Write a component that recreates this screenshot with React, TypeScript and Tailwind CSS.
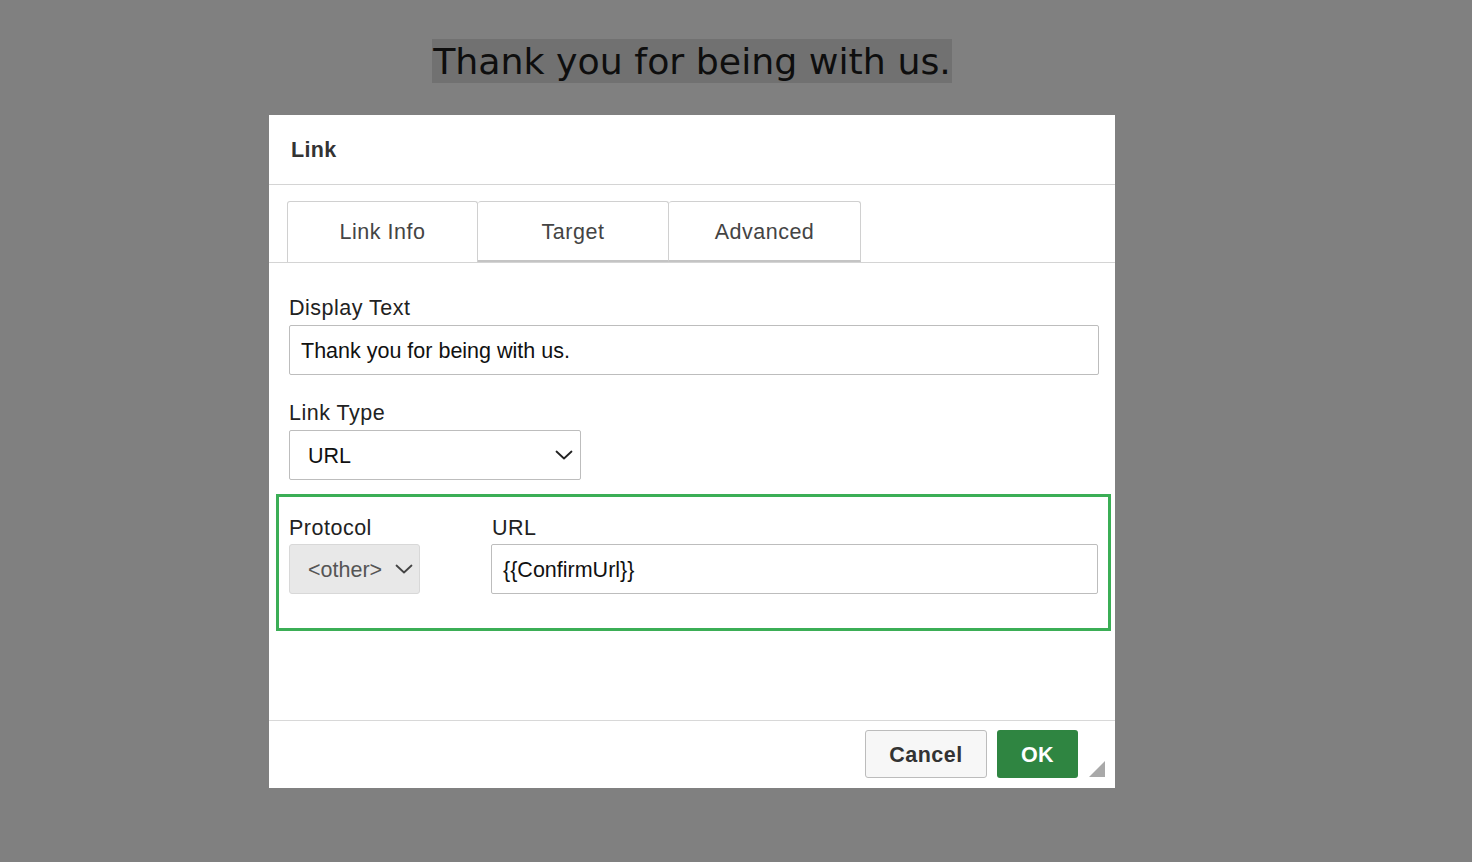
import React from "react";

function Chevron({ className }: { className?: string }) {
  return (
    <svg viewBox="0 0 18 10" className={className} fill="none" stroke="currentColor" strokeWidth="1.8" strokeLinecap="round" strokeLinejoin="round">
      <path d="M1.5 1.5 L9 8.5 L16.5 1.5" />
    </svg>
  );
}

export default function App() {
  const sans = { fontFamily: '"Liberation Sans", Arial, sans-serif' };
  return (
    <div className="min-h-[862px] w-full bg-[#808080]" style={sans}>
      <div className="ml-[269px] w-[846px] pt-[39px]">
        <div className="flex justify-center">
          <span
            className="bg-[#717171] px-[1px] pt-[2px] text-[36.3px] leading-[42px] text-[#0e0e0e]"
            style={{ fontFamily: '"DejaVu Sans", Verdana, sans-serif' }}
          >
            Thank you for being with us.
          </span>
        </div>

        <div className="relative mt-[32px] flex h-[673px] flex-col bg-white">
          {/* header */}
          <div className="flex h-[70px] items-center border-b border-[#d4d4d4] pl-[22px]">
            <span className="pt-[1px] text-[21.5px] font-bold tracking-[0.3px] text-[#333]">Link</span>
          </div>

          {/* tabs */}
          <div className="flex border-b border-[#d4d4d4] px-[18px] pt-[16px]">
            <div className="flex h-[61px] w-[191px] items-center justify-center rounded-t-[3px] border border-b-0 border-[#d0d0d0] bg-white pt-[1px] text-[21.5px] tracking-[0.5px] text-[#444]">
              Link Info
            </div>
            <div className="flex h-[61px] w-[191px] items-center justify-center rounded-t-[3px] border border-b-2 border-l-0 border-[#d0d0d0] border-b-[#c4c4c4] bg-white pt-[2px] text-[21.5px] tracking-[0.5px] text-[#444]">
              Target
            </div>
            <div className="flex h-[61px] w-[192px] items-center justify-center rounded-t-[3px] border border-b-2 border-l-0 border-[#d0d0d0] border-b-[#c4c4c4] bg-white pt-[2px] text-[21.5px] tracking-[0.5px] text-[#444]">
              Advanced
            </div>
          </div>

          {/* body */}
          <div className="flex-1 pl-[20px] pr-[16px] pt-[33px]">
            <div className="pt-[1px] text-[21.5px] leading-[23px] tracking-[0.5px] text-[#222]">Display Text</div>
            <div className="mt-[5px] flex h-[50px] items-center rounded-[2px] border border-[#bdbdbd] pl-[11px] pt-[2px] text-[21.5px] text-[#111]">
              Thank you for being with us.
            </div>

            <div className="mt-[26px] pt-[1px] text-[21.5px] leading-[23px] tracking-[0.5px] text-[#222]">Link Type</div>
            <div className="mt-[5px] flex h-[50px] w-[292px] items-center justify-between rounded-[2px] border border-[#bdbdbd] pl-[18px] pr-[7px] text-[21.5px] text-[#111]">
              <span className="pt-[2px]">URL</span>
              <Chevron className="h-[10px] w-[18px] text-[#222]" />
            </div>

            <div className="-ml-[13px] -mr-[12px] mt-[14px] border-[3px] border-[#3bae56] pb-[34px] pl-[10px] pr-[10px] pt-[19px]">
              <div className="flex">
                <div className="w-[131px]">
                  <div className="pt-[1px] text-[21.5px] leading-[23px] tracking-[0.5px] text-[#222]">Protocol</div>
                  <div className="mt-[4px] flex h-[50px] items-center justify-between rounded-[3px] border border-[#d8d8d8] bg-[#e8e8e8] pl-[18px] pr-[6px] text-[21.5px] text-[#555]">
                    <span className="pt-[2px]">&lt;other&gt;</span>
                    <Chevron className="h-[10px] w-[18px] text-[#444]" />
                  </div>
                </div>
                <div className="ml-[71px] flex-1">
                  <div className="pl-[1px] pt-[1px] text-[21.5px] leading-[23px] tracking-[0.5px] text-[#222]">URL</div>
                  <div className="mt-[4px] flex h-[50px] items-center rounded-[2px] border border-[#bdbdbd] pl-[11px] pt-[2px] text-[21.5px] text-[#111]">
                    {"{{ConfirmUrl}}"}
                  </div>
                </div>
              </div>
            </div>
          </div>

          {/* footer */}
          <div className="flex h-[68px] items-start justify-end gap-[10px] border-t border-[#d8d8d8] pr-[37px] pt-[9px]">
            <div className="flex h-[48px] w-[122px] items-center justify-center rounded-[3px] border border-[#bcbcbc] bg-[#f7f7f7] pt-[2px] text-[21.5px] font-bold tracking-[0.5px] text-[#333]">
              Cancel
            </div>
            <div className="flex h-[48px] w-[81px] items-center justify-center rounded-[3px] bg-[#2f8541] pt-[2px] text-[21.5px] font-bold tracking-[0.3px] text-white">
              OK
            </div>
          </div>

          {/* resize handle */}
          <svg className="absolute bottom-[11px] right-[10px] h-[16px] w-[16px]" viewBox="0 0 16 16">
            <polygon points="16,0 16,16 0,16" fill="#a9a9a9" />
          </svg>
        </div>
      </div>
    </div>
  );
}
